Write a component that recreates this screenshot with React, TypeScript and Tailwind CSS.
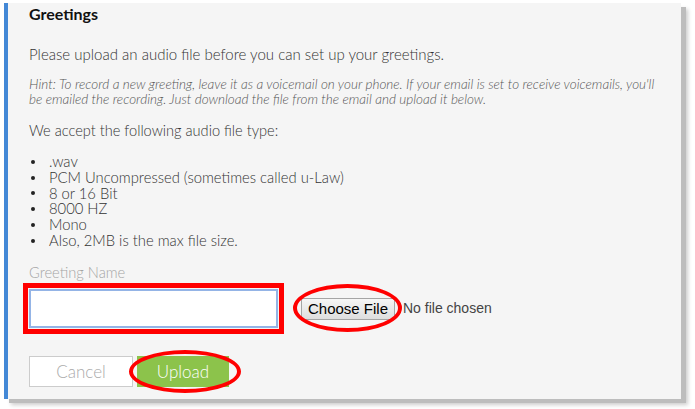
import React from "react";

export default function App() {
  const items = [
    ".wav",
    "PCM Uncompressed (sometimes called u-Law)",
    "8 or 16 Bit",
    "8000 HZ",
    "Mono",
    "Also, 2MB is the max file size.",
  ];
  return (
    <div className="w-[695px] h-[409px] bg-white pt-[3px] pl-[4px] overflow-hidden">
      <div
        className="w-[677px] h-[396px] bg-[#f5f5f5] border-l-4 border-[#4388d6] pl-[21px] pt-[1px] text-[#333] shadow-[5px_4px_0_#bdbdbd,7px_6px_4px_rgba(0,0,0,0.2)]"
        style={{ fontFamily: "Lato, 'Open Sans', sans-serif" }}
      >
        <h2 className="text-[16px] leading-[20px] font-bold text-[#111]">Greetings</h2>
        <p className="mt-[20px] text-[15px] leading-[20px] font-light text-[#333]">
          Please upload an audio file before you can set up your greetings.
        </p>
        <p className="mt-[13px] text-[13.5px] leading-[15px] italic font-light text-[#555] w-[636px]">
          Hint: To record a new greeting, leave it as a voicemail on your phone. If your email is set to receive voicemails, you'll be emailed the recording. Just download the file from the email and upload it below.
        </p>
        <p className="mt-[14px] text-[14.6px] leading-[20px] font-light">
          We accept the following audio file type:
        </p>
        <ul className="mt-[13px] text-[14.8px] leading-[15.8px] font-light">
          {items.map((t) => (
            <li key={t} className="flex items-center">
              <span className="w-[20px] flex pl-[2px]">
                <span className="w-[4px] h-[4px] rounded-full bg-[#222]" />
              </span>
              <span>{t}</span>
            </li>
          ))}
        </ul>
        <div className="mt-[14px] text-[14.7px] leading-[18px] font-light text-[#a5a5a5]">Greeting Name</div>
        <div className="mt-[8px] flex items-center">
          <input
            type="text"
            className="w-[249px] h-[39px] bg-white border-2 border-[#94b4e6] outline-[5px] outline-solid outline-[#ff0000] outline-offset-[1px]"
          />
          <div className="relative ml-[23px]">
            <button
              className="h-[22px] w-[94px] rounded-[2px] border border-[#a5a5a5] bg-gradient-to-b from-[#f6f6f6] to-[#dedede] text-[15px] leading-[20px] text-black"
              style={{ fontFamily: "'Liberation Sans', Arial, sans-serif" }}
            >
              Choose File
            </button>
            <div className="absolute left-[-8px] right-[-7px] top-[-12px] bottom-[-12px] rounded-[50%] border-4 border-[#ff0000] pointer-events-none" />
          </div>
          <span
            className="ml-[8px] text-[14px] text-[#444]"
            style={{ fontFamily: "'Liberation Sans', Arial, sans-serif" }}
          >
            No file chosen
          </span>
        </div>
        <div className="mt-[28px] flex gap-[4px]">
          <button className="w-[104px] h-[31px] bg-white border border-[#ccc] text-[17px] font-light text-[#aaa]">
            Cancel
          </button>
          <div className="relative">
            <button className="w-[92px] h-[31px] bg-[#8cc34b] text-[17px] font-light text-white">
              Upload
            </button>
            <div className="absolute left-[-8px] right-[-12px] top-[-6px] bottom-[-6px] rounded-[50%] border-4 border-[#ff0000] pointer-events-none" />
          </div>
        </div>
      </div>
    </div>
  );
}
